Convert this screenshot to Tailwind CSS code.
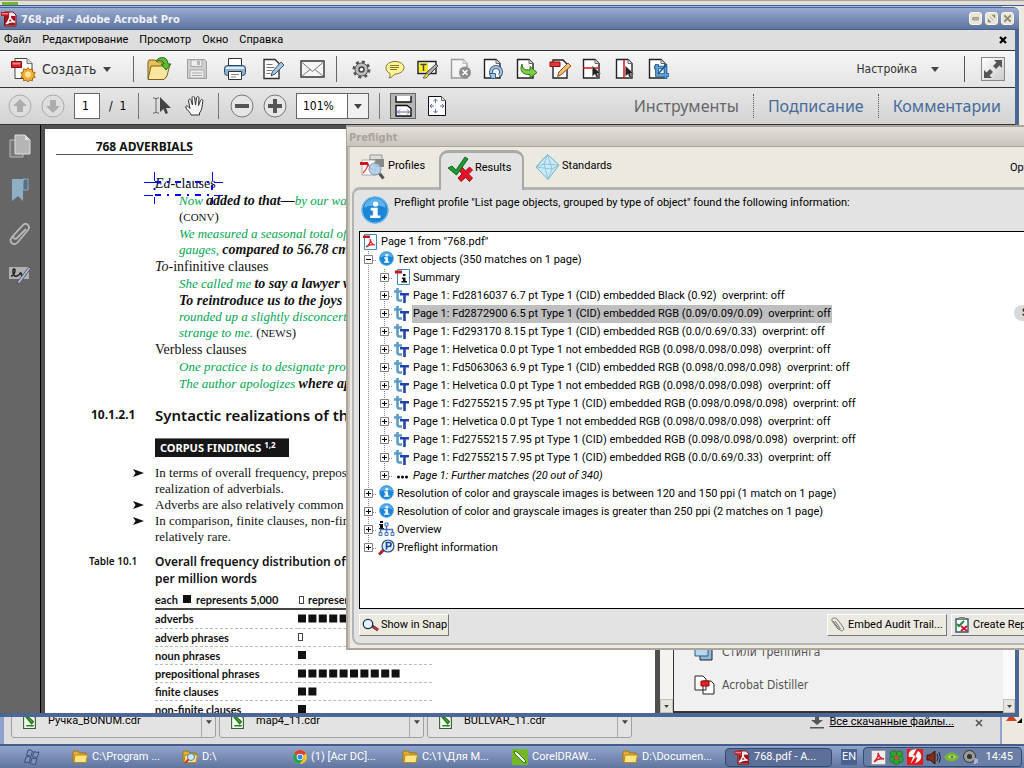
<!DOCTYPE html>
<html lang="ru">
<head>
<meta charset="utf-8">
<title>768.pdf - Adobe Acrobat Pro</title>
<script src="https://cdn.jsdelivr.net/npm/@tailwindcss/browser@4"></script>
</head>
<body class="h-screen overflow-hidden bg-[#ece9e1] font-['Roboto',sans-serif] text-[11px] text-black">

<!-- shared icons -->
<svg class="hidden" aria-hidden="true">
  <symbol id="pdf" viewBox="0 0 16 16"><path d="M3.500 1h8.500l3 3v11H3.500z" fill="#f4e9e9" stroke="#7a1414"/><path d="M0 1h8v4H0z" fill="#c3141d"/><path d="M4 5h10.500v9.500H4z" fill="#a3121a"/><path d="M5 13c2-2 4-5 4-9 0 4 2 6 5 7-4-1-6 0-9 2z" fill="none" stroke="#fff" stroke-width="1.500"/><path d="M1 2h6v1.500H1z" fill="#e98a8a"/></symbol>
  <symbol id="folder" viewBox="0 0 16 14"><path d="M1 12V2l1-1h4l1.500 2H14v9z" fill="#e5ae2f" stroke="#9c7413"/><path d="M2 12.500 3 5h12.500L14 12.500z" fill="#ffe482" stroke="#b78b1d"/></symbol>
  <symbol id="page" viewBox="0 0 22 22"><path d="M1.500 1.500h11.500l4 4v14.500H1.500z" fill="#fff" stroke="#222" stroke-width="1.400"/><path d="M13 1.500v4h4" fill="#ddd" stroke="#666"/></symbol>
  <symbol id="arrow" viewBox="0 0 10 14"><path d="M0 0v11l3-2.500L4.500 13l2-1L5 8h4z" fill="#222" stroke="#999" stroke-width=".6"/></symbol>
  <symbol id="info" viewBox="0 0 26 26"><circle cx="13" cy="13" r="12.500" fill="#1c86d6"/><circle cx="13" cy="13" r="12" fill="none" stroke="#7cc0ee"/><path d="M3 11a10 9 0 0 1 20 0c-6-3-14-3-20 0z" fill="#5db0ea"/><circle cx="13.500" cy="7.500" r="2.500" fill="#fff"/><path d="M9 11h6.500v7H18v2.500H8.500V18H11v-4.500H9z" fill="#fff"/></symbol>
  <symbol id="tt" viewBox="0 0 16 17"><path d="M3.500 1v10.500q0 2 2 2H8M0 4.500h8" fill="none" stroke="#5b9cc8" stroke-width="2.600"/><path d="M6 7.300h9M10.500 7v9" fill="none" stroke="#2443a8" stroke-width="2.600"/></symbol>
  <symbol id="plus" viewBox="0 0 16 18"><path d="M8.500 0v18M9 9.500h7" stroke="#888" stroke-dasharray="1 1"/><path d="M4.500 4.500h8v8h-8z" fill="#fff" stroke="#808080"/><path d="M6 8.500h5M8.500 6v5" stroke="#000"/></symbol>
  <symbol id="plusend" viewBox="0 0 16 18"><path d="M8.500 0v5M9 9.500h7" stroke="#888" stroke-dasharray="1 1"/><path d="M4.500 4.500h8v8h-8z" fill="#fff" stroke="#808080"/><path d="M6 8.500h5M8.500 6v5" stroke="#000"/></symbol>
  <symbol id="minus" viewBox="0 0 16 18"><path d="M8.500 0v18M9 9.500h7" stroke="#888" stroke-dasharray="1 1"/><path d="M4.500 4.500h8v8h-8z" fill="#fff" stroke="#808080"/><path d="M6 8.500h5" stroke="#000"/></symbol>
  <symbol id="vert" viewBox="0 0 16 18"><path d="M8.500 0v18" stroke="#888" stroke-dasharray="1 1"/></symbol>
  <symbol id="cdr" viewBox="0 0 12 14"><path d="M.5.5h8l3 3v10H.5z" fill="#f3fbe9" stroke="#2e5c3a"/><path d="M3 3l5 6 1.500-2L5 3zM3 11h7" fill="#6ab22e" stroke="#2d7a2d" stroke-width="1.500"/></symbol>
  <symbol id="bullet" viewBox="0 0 11 8"><path d="M0 0l11 4L0 8l2.500-4z" fill="#111"/></symbol>
  <symbol id="down" viewBox="0 0 8 5"><path d="M0 0h8L4 5z" fill="#444"/></symbol>
  <symbol id="pdfdoc" viewBox="0 0 14 16"><path d="M1.500.5h12v15h-12z" fill="#fff" stroke="#3d8ac8"/><path d="M0 1.500h7v2.500H0z" fill="#c8151b"/><path d="M3 13c3-2 5-5 4-8 1 4 2 6 5 6-4-1-6 0-9 2z" fill="none" stroke="#d3222a" stroke-width="1.200"/></symbol>
</svg>

<div class="flex h-full flex-col">
<main class="relative flex-1 overflow-hidden">

  <!-- browser window behind -->
  <section aria-label="Браузер" class="absolute inset-0 border-t border-[#a8a29a] bg-[#ece9e1]">
    <div class="flex h-[5px] items-end border-b border-[#3f5f90] bg-[#e3dfd8] pl-[2px]"><span class="h-[3px] w-[16px] bg-[#74b72c]"></span></div>
    <div class="mr-[22px] h-full border-x-4 border-t-2 border-[#8fa3cc] border-t-[#9bb6e4] bg-[#dedede]"></div>
  </section>
  <svg class="absolute right-0 bottom-[18px]" width="22" height="12" viewBox="0 0 22 12"><path d="M4 7 9 0l6 7z" fill="#d8401c"/><path d="M15 9h5V4z"/></svg>

  <section aria-label="Загрузки" class="absolute right-[24px] bottom-0 left-[6px] flex h-[45px] items-start gap-[3px] bg-[#dedede] pt-[6px] pl-[5px]">
    <div class="flex h-[33px] w-[205px] rounded-[3px] border border-[#a0a0a0] bg-[#e3e3e3]">
      <a href="#" class="flex flex-1 items-center gap-3 pl-[11px]"><svg width="13" height="15"><use href="#cdr"/></svg>Ручка_BONUM.cdr</a>
      <button aria-label="Меню" class="flex w-[14px] items-center justify-center border-l border-[#a8a8a8]"><svg width="6" height="4"><use href="#down"/></svg></button>
    </div>
    <div class="flex h-[33px] w-[205px] rounded-[3px] border border-[#a0a0a0] bg-[#e3e3e3]">
      <a href="#" class="flex flex-1 items-center gap-3 pl-[11px]"><svg width="13" height="15"><use href="#cdr"/></svg>map4_11.cdr</a>
      <button aria-label="Меню" class="flex w-[14px] items-center justify-center border-l border-[#a8a8a8]"><svg width="6" height="4"><use href="#down"/></svg></button>
    </div>
    <div class="flex h-[33px] w-[205px] rounded-[3px] border border-[#a0a0a0] bg-[#e3e3e3]">
      <a href="#" class="flex flex-1 items-center gap-3 pl-[11px]"><svg width="13" height="15"><use href="#cdr"/></svg>BULLVAR_11.cdr</a>
      <button aria-label="Меню" class="flex w-[14px] items-center justify-center border-l border-[#a8a8a8]"><svg width="6" height="4"><use href="#down"/></svg></button>
    </div>
    <div class="ml-auto flex h-[35px] items-center gap-[5px] pr-[17px]">
      <svg width="14" height="13" viewBox="0 0 14 13"><path d="M5 0h4v4h4L7 9 1 4h4zM0 11h14v1.500H0z" fill="#555"/></svg>
      <a href="#" class="underline">Все скачанные файлы...</a>
      <button aria-label="Закрыть" class="ml-[16px]"><svg width="8" height="8" viewBox="0 0 8 8"><path d="M1 1l6 6M7 1L1 7" stroke="#555" stroke-width="1.600"/></svg></button>
    </div>
  </section>

  <!-- Acrobat window -->
  <section aria-label="Adobe Acrobat Pro" class="absolute top-[7px] right-[5px] bottom-[27px] left-0 flex flex-col rounded-tr-[6px] border-t border-r-4 border-b-4 border-[#4d6795] bg-[#4f4f4f]">
    <header class="-mr-1 flex h-[22px] shrink-0 items-center gap-1 rounded-tr-[5px] border-b border-[#455f8f] bg-linear-to-b from-[#9aabcf] to-[#5e749f] pr-[5px] pl-px">
      <svg width="16" height="16"><use href="#pdf"/></svg>
      <h1 class="flex-1 pt-[3px] font-['DejaVu_Sans_Condensed',sans-serif] text-[11px] font-bold text-[#eef0f5]">768.pdf - Adobe Acrobat Pro</h1>
      <div class="flex gap-[3px]">
        <button aria-label="Свернуть" class="size-[13px] rounded-[3px] border border-[#f7f4ea] bg-[#e8e5da]"><svg viewBox="0 0 12 12"><path d="M3 5h6v2.500H3z" fill="#c8c2b0" stroke="#8d886f"/></svg></button>
        <button aria-label="Восстановить" class="size-[13px] rounded-[3px] border border-[#f7f4ea] bg-[#e8e5da]"><svg viewBox="0 0 12 12"><path d="M6 2h4v4zM2 6v4h4z" fill="#8d886f"/><path d="M4 4l4 4" stroke="#aaa58d"/></svg></button>
        <button aria-label="Закрыть" class="size-[13px] rounded-[3px] border border-[#f7f4ea] bg-[#e8e5da]"><svg viewBox="0 0 12 12"><path d="M2.500 2.500l7 7M9.500 2.500l-7 7" stroke="#8d886f" stroke-width="2"/></svg></button>
      </div>
    </header>

    <nav class="flex h-[21px] shrink-0 items-center gap-[11px] border-b border-[#333] bg-[#dedede] pr-2 pl-1">
      <a href="#">Файл</a><a href="#">Редактирование</a><a href="#">Просмотр</a><a href="#">Окно</a><a href="#">Справка</a>
      <button aria-label="Закрыть документ" class="ml-auto"><svg width="8" height="8" viewBox="0 0 8 8"><path d="M1 1l6 6M7 1L1 7" stroke="#000" stroke-width="2.200"/></svg></button>
    </nav>

    <div class="flex h-[37px] shrink-0 items-center border-b border-[#333] bg-linear-to-b from-[#f6f6f6] to-[#e4e4e4] text-[#333]">
      <button class="flex w-[133px] items-center pl-[11px] font-['DejaVu_Sans_Condensed',sans-serif] text-[14px]">
        <svg width="25" height="25" viewBox="0 0 25 25"><path d="M4 1.500h12l5 5v15H4z" fill="#fff" stroke="#444"/><path d="M16 1.500v5h5" fill="#ddd" stroke="#777"/><path d="M.5 4.500h10v6H.5z" fill="#cf1f2a" stroke="#900"/><path d="M1.500 5.500h8v2h-8z" fill="#f08080"/><path d="M17 10.500l1.700 2.200 2.700-.7.100 2.800 2.700.9-1.500 2.300 1.500 2.300-2.700.8-.1 2.800-2.700-.8-1.700 1.900-1.700-2-2.700.9-.1-2.800-2.600-.8 1.500-2.300-1.500-2.400 2.600-.8.100-2.800 2.700.7z" fill="#f2ae33" stroke="#a56b0a"/><circle cx="17" cy="17.500" r="3" fill="#ffe39a"/></svg>
        <span class="ml-[6px]">Создать</span><svg class="ml-[7px]" width="8" height="5"><use href="#down"/></svg>
      </button>
      <span class="mr-[6px] h-[26px] w-px bg-[#666]"></span>
      <button aria-label="Открыть" class="flex w-[38px] justify-center"><svg width="26" height="26" viewBox="0 0 26 26"><path d="M2 23V6l1-2h6l2 2h7v17z" fill="#e9c15b" stroke="#7d5f17"/><path d="M2 23.500 5 10h14l5-2-3 12-3 3.500z" fill="#fbe6a0" stroke="#7d5f17"/><path d="M10 5c3-5 12-5 12 3h3l-5 6-5-6h3c0-3-4-4-8-3z" fill="#5fbd33" stroke="#236b14"/></svg></button>
      <button aria-label="Сохранить" class="flex w-[38px] justify-center"><svg width="22" height="22" viewBox="0 0 22 22"><path d="M1.500 1.500h17l2 2v17h-19z" fill="#cfcfcf" stroke="#a0a0a0"/><path d="M5 2h11v6.500H5zM4 12h14v8H4z" fill="#eee" stroke="#a8a8a8"/><path d="M11 3h3v4h-3z" fill="#b5b5b5"/><path d="M6 15h10M6 17.500h10" stroke="#aaa"/></svg></button>
      <button aria-label="Печать" class="flex w-[38px] justify-center"><svg width="24" height="24" viewBox="0 0 24 24"><path d="M5.500 1.500h13v10h-13z" fill="#fff" stroke="#333"/><rect x="1.500" y="8.500" width="21" height="10" rx="3" fill="#8fb0d0" stroke="#2b4a68"/><path d="M3 11h18" stroke="#dcecf8" stroke-width="2"/><path d="M5.500 14.500h13v8h-13z" fill="#fff" stroke="#333"/><path d="M8 17.500h8M8 20h5" stroke="#888"/></svg></button>
      <button aria-label="Подписать" class="flex w-[39px] justify-center"><svg width="23" height="22" viewBox="0 0 23 22"><path d="M2 1.500h11l4 4v15H2z" fill="#fff" stroke="#333" stroke-width="1.400"/><path d="M4.500 6.500h6M4.500 9.500h8M4.500 12.500h6M4.500 15.500h4" stroke="#777"/><path d="M19 4l3 3-9 9-4 2 1.500-4.500z" fill="#aac7df" stroke="#33526c"/></svg></button>
      <button aria-label="Почта" class="flex w-[38px] justify-center"><svg width="25" height="18" viewBox="0 0 25 18"><path d="M1 1h23v16H1z" fill="#f4f4f4" stroke="#333" stroke-width="1.400"/><path d="M1 1.500l11.500 10L24 1.500M1.500 16.500l8.500-7M23.500 16.500l-8.500-7" fill="none" stroke="#777"/></svg></button>
      <span class="mr-[8px] ml-[5px] h-[26px] w-px bg-[#666]"></span>
      <button aria-label="Параметры" class="flex w-[33px] justify-center"><svg width="19" height="19" viewBox="0 0 19 19"><circle cx="9.500" cy="9.500" r="7.500" fill="none" stroke="#555" stroke-width="3" stroke-dasharray="3 2.900"/><circle cx="9.500" cy="9.500" r="6.500" fill="#bdbdbd" stroke="#555"/><circle cx="9.500" cy="9.500" r="2.500" fill="#eee" stroke="#444" stroke-width="1.400"/></svg></button>
      <button aria-label="Комментарий" class="flex w-[33px] justify-center"><svg width="20" height="19" viewBox="0 0 20 19"><path d="M10 1.500c5 0 9 2.600 9 6s-4 6.500-9 6.500c-1 0-3 4-6 4 1-1.500 1.500-3 1-4.500C2.500 12.500 1 10 1 7.500c0-3.400 4-6 9-6z" fill="#fdf59a" stroke="#8a7320"/><path d="M5 5.500h9M5 7.500h9M5 9.500h7" stroke="#8a7320"/></svg></button>
      <button aria-label="Выделение текста" class="flex w-[33px] justify-center"><svg width="21" height="19" viewBox="0 0 21 19"><path d="M1 1.500h18v12H1z" fill="#fff" stroke="#222" stroke-width="1.400"/><path d="M2 3h9v9H2z" fill="#ffec1f"/><path d="M3.500 4.500h6M6.500 4.500v6.500" stroke="#444" stroke-width="1.500"/><path d="M19 4l2 2-9 9-3-2z" fill="#aaa" stroke="#444"/><path d="M10 13l2 2-3 3H6z" fill="#ffd83c" stroke="#666655"/></svg></button>
      <button aria-label="Удалить страницу" class="flex w-[33px] justify-center"><svg width="22" height="22" viewBox="0 0 22 22"><g opacity=".4"><use href="#page"/></g><circle cx="15" cy="14.500" r="6" fill="#8e8e8e"/><path d="M12.500 12l5 5M17.500 12l-5 5" stroke="#fff" stroke-width="1.500"/></svg></button>
      <button aria-label="Повернуть страницу" class="flex w-[33px] justify-center"><svg width="22" height="22" viewBox="0 0 22 22"><use href="#page"/><path d="M9.500 17.500a5 5 0 1 1 7 0" fill="none" stroke="#37618a" stroke-width="4"/><path d="M9.500 17.500a5 5 0 1 1 7 0" fill="none" stroke="#a8c8e4" stroke-width="2"/><path d="M6.500 15.500h6v5h-4z" fill="#a8c8e4" stroke="#37618a"/></svg></button>
      <button aria-label="Извлечь страницу" class="flex w-[33px] justify-center"><svg width="22" height="22" viewBox="0 0 22 22"><use href="#page"/><path d="M6 6c0 5 3 6 8 6V8.500l7 6-7 5.500v-3.500C7 17 3 13 6 6z" fill="#7fce45" stroke="#2c6e17"/></svg></button>
      <button aria-label="Редактировать документ" class="flex w-[33px] justify-center"><svg width="22" height="22" viewBox="0 0 22 22"><path d="M4 2h10l4 4v14H4z" fill="#fff" stroke="#222" stroke-width="1.400"/><path d="M1 4h10v4.500H1z" fill="#dc3a3f" stroke="#a00"/><path d="M19 5l3 3-9.500 8.500-4 2L10 14z" fill="#f7c079" stroke="#8a4a15"/></svg></button>
      <button aria-label="Разделить по горизонтали" class="flex w-[33px] justify-center"><svg width="22" height="22" viewBox="0 0 22 22"><use href="#page"/><path d="M1 10h16" stroke="#e01010" stroke-width="1.500"/><use href="#arrow" x="10" y="8" width="10" height="13"/></svg></button>
      <button aria-label="Разделить по вертикали" class="flex w-[33px] justify-center"><svg width="22" height="22" viewBox="0 0 22 22"><use href="#page"/><path d="M9 2v18" stroke="#e01010" stroke-width="1.500"/><use href="#arrow" x="10" y="8" width="10" height="13"/></svg></button>
      <button aria-label="Обрезать" class="flex w-[33px] justify-center"><svg width="22" height="22" viewBox="0 0 22 22"><use href="#page"/><path d="M9 6v11h12M6 9.500h11.500V21" fill="none" stroke="#174f86" stroke-width="3.600"/><path d="M9 6.500v10.500h11.500M6.500 9.500h11V20.500" fill="none" stroke="#5ca2df" stroke-width="1.800"/><path d="M10 16l9-10" stroke="#174f86" stroke-width="1.200"/></svg></button>
      <button class="mr-[25px] ml-auto flex items-center gap-[14px] font-['DejaVu_Sans_Condensed',sans-serif] text-[12px]">Настройка<svg width="8" height="5"><use href="#down"/></svg></button>
      <span class="h-[26px] w-px bg-[#555]"></span>
      <button aria-label="Полноэкранный режим" class="mr-[10px] ml-[16px] size-[24px] border border-[#888] bg-linear-to-br from-white to-[#ccc]"><svg viewBox="0 0 22 22"><path d="M12 2h8v8l-2.500-2.500L14 11l-3-3 3.500-3.500zM2 20v-8l2.500 2.500L8 11l3 3-3.500 3.500L10 20z" fill="#555"/></svg></button>
    </div>

    <div class="flex h-[37px] shrink-0 items-center border-b border-[#333] bg-linear-to-b from-[#e6e6e6] to-[#d3d3d3]">
      <button aria-label="Предыдущая страница" class="ml-[8px]"><svg width="24" height="24" viewBox="0 0 24 24"><circle cx="12" cy="12" r="11" fill="#dedede" stroke="#ababab"/><path d="M12 5l7 7h-4v6H9v-6H5z" fill="#adadad"/></svg></button>
      <button aria-label="Следующая страница" class="ml-[9px]"><svg width="24" height="24" viewBox="0 0 24 24"><circle cx="12" cy="12" r="11" fill="#dedede" stroke="#ababab"/><path d="M12 19l7-7h-4V6H9v6H5z" fill="#adadad"/></svg></button>
      <input aria-label="Страница" value="1" class="ml-[9px] h-[26px] w-[26px] border border-[#666] bg-white pl-[7px] font-['DejaVu_Sans_Condensed',sans-serif] text-[12px]">
      <span class="ml-[9px] w-[29px] font-['DejaVu_Sans_Condensed',sans-serif] text-[12px] whitespace-pre">/  1</span>
      <span class="h-[26px] w-px bg-[#777]"></span>
      <button aria-label="Выделение" class="ml-[13px]"><svg width="20" height="20" viewBox="0 0 20 20"><path d="M1 2h2l1 1 1-1h2M4 3v13M1 17h2l1-1 1 1h2" fill="none" stroke="#666"/><path d="M8 1v15l3.500-3 2 5 2.500-1-2-5h5z" fill="#444"/></svg></button>
      <button aria-label="Рука" class="ml-[12px]"><svg width="22" height="22" viewBox="0 0 22 22"><path d="M7 20c0-2-3-4-5-7-1-2 1-3 2.500-1L6 13.500 4.500 6c-.3-2 2-2.500 2.500-.5L8.500 10 8 3c0-2 2.500-2 2.700 0L11.500 10l1-7c.3-2 2.600-1.600 2.500.2L14.500 10.500l2-5c.8-1.700 2.800-1 2.300.8C18 10 18.500 15 15.500 18v2z" fill="#f6f6f6" stroke="#333"/></svg></button>
      <span class="ml-[12px] h-[26px] w-px bg-[#777]"></span>
      <button aria-label="Уменьшить" class="ml-[11px]"><svg width="24" height="24" viewBox="0 0 24 24"><circle cx="12" cy="12" r="11" fill="#e6e6e6" stroke="#777"/><path d="M5 10h14v4H5z" fill="#555"/></svg></button>
      <button aria-label="Увеличить" class="ml-[9px]"><svg width="24" height="24" viewBox="0 0 24 24"><circle cx="12" cy="12" r="11" fill="#e6e6e6" stroke="#777"/><path d="M5 10h5V5h4v5h5v4h-5v5h-4v-5H5z" fill="#555"/></svg></button>
      <div class="ml-[9px] flex h-[26px] w-[73px] border border-[#666] bg-white">
        <input aria-label="Масштаб" value="101%" class="w-[51px] border-r border-[#666] pl-[6px] font-['DejaVu_Sans_Condensed',sans-serif] text-[12px]">
        <button aria-label="Выбрать масштаб" class="flex flex-1 items-center justify-center bg-[#f0f0f0]"><svg width="8" height="5"><use href="#down"/></svg></button>
      </div>
      <span class="ml-[10px] h-[26px] w-px bg-[#777]"></span>
      <button aria-label="По ширине" class="ml-[10px] flex size-[26px] items-center justify-center border border-[#666] bg-[#b5b5b5]"><svg width="17" height="21" viewBox="0 0 17 21"><path d="M1 0v6h15V0" fill="#fff" stroke="#111" stroke-width="1.400"/><path d="M1 20V9.500h11l4 3V20z" fill="#fff" stroke="#111" stroke-width="1.400"/><path d="M2.500 16h12M5 13.500 2.500 16 5 18.500M12 13.500l2.500 2.500-2.500 2.500" fill="none" stroke="#5570b8"/></svg></button>
      <button aria-label="Страница целиком" class="ml-[12px]"><svg width="18" height="20" viewBox="0 0 18 20"><path d="M.5.500h13l4 4v15H.5z" fill="#fff" stroke="#111"/><path d="M13.500.500v4h4" fill="#ddd" stroke="#666"/><path d="M7.500 3v4M7.500 13v4M2 10h4M12 10h4M5.500 5l2-2 2 2M5.500 15l2 2 2-2M4 8l-2 2 2 2M14 8l2 2-2 2" fill="none" stroke="#5570b8"/></svg></button>
      <nav class="ml-auto flex items-center font-['Noto_Sans',sans-serif] text-[16px] text-[#466c9a]">
        <a href="#" class="pr-[14px] text-[#666]">Инструменты</a>
        <a href="#" class="border-l border-dotted border-[#555] px-[14px]">Подписание</a>
        <a href="#" class="border-l border-dotted border-[#555] px-[14px]">Комментарии</a>
      </nav>
    </div>

    <div class="flex min-h-0 flex-1">
      <aside class="flex w-[41px] shrink-0 flex-col items-center gap-[20px] border-r border-black bg-[#666] pt-[9px]">
        <button aria-label="Миниатюры"><svg width="22" height="24" viewBox="0 0 22 24"><path d="M1 6h13v17H1z" fill="#777" stroke="#bbb"/><path d="M6 1h10l5 5v14H6z" fill="#b5b5b5" stroke="#ddd"/><path d="M16 1v5h5z" fill="#e0e0e0"/></svg></button>
        <button aria-label="Закладки"><svg width="18" height="24" viewBox="0 0 18 24"><path d="M12 1h5v11h-5z" fill="#557186" stroke="#88a8bf"/><path d="M1 1h13q-2 1-2 3v19l-5-5-6 5z" fill="#8fafc6"/></svg></button>
        <button aria-label="Вложения"><svg width="22" height="24" viewBox="0 0 22 24"><path d="M17 7 8 16c-2 2-5 0-3-3L14 3c3-3 8 1 5 5L9 20c-4 5-10 0-6-5l9-10" fill="none" stroke="#b8b8b8" stroke-width="1.800"/></svg></button>
        <button aria-label="Подписи"><svg width="24" height="18" viewBox="0 0 24 18"><path d="M1 1h20v12H1z" fill="#b0b0b0"/><path d="M3 10c4 0 5-8 3-7S5 12 9 10s3-4 4-3-1 4 3 2" fill="none" stroke="#222" stroke-width="1.500"/><path d="M23 2 12 17l-3 1 1-3L21 1z" fill="#a9c0d0" stroke="#555566"/></svg></button>
      </aside>

      <div class="min-w-0 flex-1 overflow-hidden bg-[#4f4f4f] pt-[4px] pr-[5px] pl-[4px]">
        <!-- document page -->
        <article lang="en" class="relative h-[1000px] bg-white whitespace-nowrap text-[#111]">
          <p class="ml-[11px] w-[137px] border-b border-[#555] pt-[10px] text-right font-['Noto_Sans',sans-serif] text-[12px] leading-[15px] font-bold">768 ADVERBIALS</p>
          <div class="ml-[110px] pt-[20px] font-['Liberation_Serif',serif] text-[14px] leading-[17px]">
            <p><i>Ed</i>-clauses</p>
            <p class="pl-[24px] text-[13px] text-[#00a651] italic">Now <b class="text-[14px] text-[#111]">added to that—</b>by our way of</p>
            <p class="pl-[24px] text-[13px] leading-[16px]">(<span class="text-[11px]">CONV</span>)</p>
            <p class="pl-[24px] text-[13px] text-[#00a651] italic">We measured a seasonal total of</p>
            <p class="pl-[24px] text-[13px] leading-[16px] text-[#00a651] italic">gauges, <b class="text-[14px] text-[#111]">compared to 56.78 cm</b></p>
            <p><i>To</i>-infinitive clauses</p>
            <p class="pl-[24px] text-[13px] text-[#00a651] italic">She called me <b class="text-[14px] text-[#111]">to say a lawyer w</b></p>
            <p class="pl-[24px] italic"><b>To reintroduce us to the joys</b></p>
            <p class="pl-[24px] text-[13px] leading-[16px] text-[#00a651] italic">rounded up a slightly disconcerting</p>
            <p class="pl-[24px] text-[13px] leading-[16px] text-[#00a651] italic">strange to me. <span class="text-[#111] not-italic">(<span class="text-[11px]">NEWS</span>)</span></p>
            <p>Verbless clauses</p>
            <p class="pl-[24px] text-[13px] text-[#00a651] italic">One practice is to designate provisions</p>
            <p class="pl-[24px] text-[13px] text-[#00a651] italic">The author apologizes <b class="text-[14px] text-[#111]">where appropriate</b></p>
          </div>
          <h2 class="flex items-center pt-[12px] pl-[46px] font-['Noto_Sans',sans-serif] text-[15px] leading-[22px] font-semibold"><span class="w-[64px] text-[12px] font-bold">10.1.2.1</span>Syntactic realizations of the</h2>
          <p class="mt-[12px] ml-[110px] w-[134px] border-t border-[#777] bg-[#161616] pl-[5px] font-['Noto_Sans',sans-serif] text-[11px] leading-[18px] font-bold text-white">CORPUS FINDINGS <sup class="text-[8px]">1,2</sup></p>
          <ul class="mt-[8px] ml-[88px] font-['Liberation_Serif',serif] text-[13px] leading-[16px]">
            <li class="flex gap-[11px]"><svg class="mt-[4px]" width="11" height="8"><use href="#bullet"/></svg><span>In terms of overall frequency, prepositional<br>realization of adverbials.</span></li>
            <li class="flex gap-[11px]"><svg class="mt-[4px]" width="11" height="8"><use href="#bullet"/></svg><span>Adverbs are also relatively common as</span></li>
            <li class="flex gap-[11px]"><svg class="mt-[4px]" width="11" height="8"><use href="#bullet"/></svg><span>In comparison, finite clauses, non-finite<br>relatively rare.</span></li>
          </ul>
          <div class="flex pt-[8px] pl-[44px] font-['Noto_Sans',sans-serif] leading-[17px] font-semibold"><span class="w-[66px] text-[10px]">Table 10.1</span><h3 class="text-[12px]">Overall frequency distribution of<br>per million words</h3></div>
          <table class="ml-[110px] w-[277px] border-collapse font-['Lato',sans-serif] text-[11px] leading-[17px] font-bold">
            <thead><tr class="border-b-2 border-[#444]"><th class="flex h-[21px] items-center gap-[5px] pt-[3px] font-bold">each <span class="size-[8px] bg-[#111]"></span> represents 5,000</th><th class="pt-[3px] pl-[1px] text-left font-bold"><span class="mr-[4px] inline-block h-[8px] w-[5px] border border-[#444]"></span>represents</th></tr></thead>
            <tbody>
              <tr class="h-[19px] border-b border-dashed border-[#bbb]"><td class="w-[143px]">adverbs</td><td><svg width="134" height="9"><path d="M0 4.500h113" stroke="#111" stroke-width="8" stroke-dasharray="8 2.400"/></svg></td></tr>
              <tr class="h-[18px] border-b border-dashed border-[#bbb]"><td>adverb phrases</td><td><span class="block h-[8px] w-[5px] border border-[#444]"></span></td></tr>
              <tr class="h-[18px] border-b border-dashed border-[#bbb]"><td>noun phrases</td><td><span class="block size-[8px] bg-[#111]"></span></td></tr>
              <tr class="h-[18px] border-b border-dashed border-[#bbb]"><td>prepositional phrases</td><td><svg width="134" height="9"><path d="M0 4.500h102" stroke="#111" stroke-width="8" stroke-dasharray="8 2.400"/></svg></td></tr>
              <tr class="h-[18px] border-b border-dashed border-[#bbb]"><td>finite clauses</td><td><svg width="134" height="9"><path d="M0 4.500h18.400" stroke="#111" stroke-width="8" stroke-dasharray="8 2.400"/></svg></td></tr>
              <tr class="h-[18px]"><td>non-finite clauses</td><td><span class="block size-[8px] bg-[#111]"></span></td></tr>
            </tbody>
          </table>
          <!-- selection marks round the found text -->
          <svg class="absolute top-[39px] left-[99px]" width="80" height="36" viewBox="0 0 80 36"><path d="M0 14.500h11M0 27.500h9M70 14.500h9M70 27.500h9M10.500 4v9M10.500 29v9M68.500 4v9M68.500 29v9" stroke="#00f"/><path d="M11 14h57M11 27h57" fill="none" stroke="#00f" stroke-width="2" stroke-dasharray="6 6 2 6"/><path d="M68 17v5M10.500 20v2" stroke="#00f" stroke-width="2"/></svg>
        </article>
      </div>

      <div class="flex w-[13px] shrink-0 flex-col justify-end bg-[#f5f3ef]"><button aria-label="Прокрутить вниз" class="flex h-[14px] items-center justify-center border border-[#c4c0b8] bg-[#e8e5de]"><svg width="5" height="3"><use href="#down"/></svg></button></div>
      <aside class="flex w-[330px] shrink-0 flex-col justify-end gap-[14px] border-b-2 border-l border-[#333] bg-[#f0f0f0] pb-[16px] pl-[20px] font-['DejaVu_Sans_Condensed',sans-serif] text-[12px] text-[#555]">
        <a href="#" class="flex items-center gap-[8px]"><svg width="20" height="19" viewBox="0 0 20 19"><path d="M6 4h12v14H6z" fill="#8fb8dc" stroke="#222"/><path d="M1 1h13v13H1z" fill="#b7d6ee" stroke="#36597a"/></svg>Стили треппинга</a>
        <a href="#" class="flex items-center gap-[7px]"><svg width="21" height="20" viewBox="0 0 21 20"><path d="M1 1h8l3 3v11H1zM9 6h8l3 3v10H9z" fill="#fff" stroke="#222"/><path d="M7 6h8v5H7z" fill="#d7262e" stroke="#a00"/></svg>Acrobat Distiller</a>
      </aside>
      <div class="flex w-[12px] shrink-0 flex-col justify-end bg-[#fafafa]"><button aria-label="Прокрутить панель вниз" class="flex h-[14px] items-center justify-center border border-[#c4c0b8] bg-[#e8e5de]"><svg width="5" height="3"><use href="#down"/></svg></button></div>
    </div>
  </section>

  <!-- Preflight window, running off the right edge -->
  <section lang="en" aria-label="Preflight" class="absolute top-[125px] -right-[104px] bottom-[94px] left-[346px] flex flex-col border-2 border-[#aaa69e] bg-[#ece9e1]">
    <header class="-ml-px flex h-[20px] shrink-0 items-center border-b border-[#a8a49c] bg-linear-to-b from-[#e2dfd9] to-[#c8c4bd] pt-[3px] pl-[2px] font-['DejaVu_Sans_Condensed',sans-serif] font-bold text-[#a9a49a]">Preflight</header>
    <div class="flex min-h-0 flex-1 flex-col border-l-2 border-[#c9c5bd] px-[2px] pb-[3px]">
      <div role="tablist" class="relative z-10 flex h-[40px] shrink-0 items-end">
        <button role="tab" class="flex h-[38px] w-[87px] items-center gap-[3px] pb-[3px] pl-[8px]"><svg width="25" height="26" viewBox="0 0 25 26"><path d="M10 1h12v5H10z" fill="#ddd" stroke="#999"/><path d="M9 5h15v8H9z" fill="#888"/><path d="M2 6h13v15H2z" fill="#fff" stroke="#aaa"/><path d="M3 19c3-3 5-7 5-10 1 5 4 7 7 7" fill="none" stroke="#d33" stroke-width="1.200"/><path d="M0 8h8v3H0z" fill="#d4141c"/><circle cx="15" cy="15" r="6" fill="#a9cdea" fill-opacity=".85" stroke="#7b94aa"/><path d="M19.500 19.500l4 5" stroke="#555" stroke-width="3"/></svg>Profiles</button>
        <button role="tab" aria-selected="true" class="-mb-[3px] flex h-[40px] w-[85px] items-center gap-[2px] rounded-t-[9px] border-x-2 border-t-3 border-[#a8a8a8] bg-[#e3e3e3] pb-[6px] pl-[7px]"><svg width="25" height="26" viewBox="0 0 25 26"><path d="M10 13l4-2 3.500 4 4-4 3 3-4 4 4 4-3 3.500-4-4-4.500 4-3-3.500 4-4z" fill="#e0152a" stroke="#a50d1d"/><path d="M0 12l4-2 4 4L17 1l3 2L8.500 19z" fill="#1f9a36" stroke="#0e6b20"/></svg>Results</button>
        <button role="tab" class="flex h-[38px] items-center gap-[2px] pb-[3px] pl-[11px]"><svg width="25" height="26" viewBox="0 0 25 26"><path d="M12.500.5 24 11 13 25.500 1 13z" fill="#c9e9f5" stroke="#6fb4cf"/><path d="M12.500.5 17 15l7-4M17 15 1 13l11.500-12.500M17 15l-4 10.500M1 13l8-3 15 1M9 10l3.500-9.500M9 10l4 15" fill="none" stroke="#7dbdd6" stroke-width=".8"/></svg>Standards</button>
        <button class="mr-[76px] mb-[11px] ml-auto">Options</button>
      </div>
      <div class="flex min-h-0 flex-1 flex-col rounded-[8px] border-2 border-t-3 border-[#b4b4b4] bg-[#e3e3e3] px-[5px]">
        <div class="flex h-[41px] shrink-0 gap-[5px] pt-[6px] pl-[2px]"><svg class="shrink-0" width="28" height="28"><use href="#info"/></svg><p class="leading-[14px]">Preflight profile "List page objects, grouped by type of object" found the following information:</p></div>
        <div role="tree" class="flex min-h-0 flex-1 flex-col border border-black bg-white pt-px leading-[18px] whitespace-pre">
          <div class="flex h-[18px] items-center gap-[4px] pl-[3px]"><svg width="14" height="16"><use href="#pdfdoc"/></svg>Page 1 from "768.pdf"</div>
          <div class="flex h-[18px]"><button aria-label="Свернуть"><svg width="16" height="18"><use href="#minus"/></svg></button><svg class="mx-[3px]" width="15" height="15"><use href="#info"/></svg>Text objects (350 matches on 1 page)</div>
          <div class="flex h-[18px]"><svg width="16" height="18"><use href="#vert"/></svg><button aria-label="Развернуть"><svg width="16" height="18"><use href="#plus"/></svg></button><svg class="mr-[2px] ml-[3px]" width="16" height="17" viewBox="0 0 16 17"><path d="M2.500.5h12v15h-12z" fill="#fff" stroke="#3d8ac8"/><path d="M0 1.500h7v3H0z" fill="#c8151b"/><path d="M8 5h2.500v2H8zM7 8.500h3.500V12H12v1.500H6.500V12H8v-2H7z" fill="#111"/></svg><span>Summary</span></div>
          <div class="flex h-[18px]"><svg width="16" height="18"><use href="#vert"/></svg><button aria-label="Развернуть"><svg width="16" height="18"><use href="#plus"/></svg></button><svg class="mx-[2px]" width="16" height="17"><use href="#tt"/></svg><span class="px-px">Page 1: Fd2816037 6.7 pt Type 1 (CID) embedded Black (0.92)  overprint: off</span></div>
          <div class="flex h-[18px]"><svg width="16" height="18"><use href="#vert"/></svg><button aria-label="Развернуть"><svg width="16" height="18"><use href="#plus"/></svg></button><svg class="mx-[2px]" width="16" height="17"><use href="#tt"/></svg><span class="bg-[#bfbfbf] px-px">Page 1: Fd2872900 6.5 pt Type 1 (CID) embedded RGB (0.09/0.09/0.09)  overprint: off</span><button class="mr-[20px] ml-auto h-[16px] rounded-full bg-[#d8d8d8] px-[8px] leading-[16px]">Show in Snap</button></div>
          <div class="flex h-[18px]"><svg width="16" height="18"><use href="#vert"/></svg><button aria-label="Развернуть"><svg width="16" height="18"><use href="#plus"/></svg></button><svg class="mx-[2px]" width="16" height="17"><use href="#tt"/></svg><span class="px-px">Page 1: Fd293170 8.15 pt Type 1 (CID) embedded RGB (0.0/0.69/0.33)  overprint: off</span></div>
          <div class="flex h-[18px]"><svg width="16" height="18"><use href="#vert"/></svg><button aria-label="Развернуть"><svg width="16" height="18"><use href="#plus"/></svg></button><svg class="mx-[2px]" width="16" height="17"><use href="#tt"/></svg><span class="px-px">Page 1: Helvetica 0.0 pt Type 1 not embedded RGB (0.098/0.098/0.098)  overprint: off</span></div>
          <div class="flex h-[18px]"><svg width="16" height="18"><use href="#vert"/></svg><button aria-label="Развернуть"><svg width="16" height="18"><use href="#plus"/></svg></button><svg class="mx-[2px]" width="16" height="17"><use href="#tt"/></svg><span class="px-px">Page 1: Fd5063063 6.9 pt Type 1 (CID) embedded RGB (0.098/0.098/0.098)  overprint: off</span></div>
          <div class="flex h-[18px]"><svg width="16" height="18"><use href="#vert"/></svg><button aria-label="Развернуть"><svg width="16" height="18"><use href="#plus"/></svg></button><svg class="mx-[2px]" width="16" height="17"><use href="#tt"/></svg><span class="px-px">Page 1: Helvetica 0.0 pt Type 1 not embedded RGB (0.098/0.098/0.098)  overprint: off</span></div>
          <div class="flex h-[18px]"><svg width="16" height="18"><use href="#vert"/></svg><button aria-label="Развернуть"><svg width="16" height="18"><use href="#plus"/></svg></button><svg class="mx-[2px]" width="16" height="17"><use href="#tt"/></svg><span class="px-px">Page 1: Fd2755215 7.95 pt Type 1 (CID) embedded RGB (0.098/0.098/0.098)  overprint: off</span></div>
          <div class="flex h-[18px]"><svg width="16" height="18"><use href="#vert"/></svg><button aria-label="Развернуть"><svg width="16" height="18"><use href="#plus"/></svg></button><svg class="mx-[2px]" width="16" height="17"><use href="#tt"/></svg><span class="px-px">Page 1: Helvetica 0.0 pt Type 1 not embedded RGB (0.098/0.098/0.098)  overprint: off</span></div>
          <div class="flex h-[18px]"><svg width="16" height="18"><use href="#vert"/></svg><button aria-label="Развернуть"><svg width="16" height="18"><use href="#plus"/></svg></button><svg class="mx-[2px]" width="16" height="17"><use href="#tt"/></svg><span class="px-px">Page 1: Fd2755215 7.95 pt Type 1 (CID) embedded RGB (0.098/0.098/0.098)  overprint: off</span></div>
          <div class="flex h-[18px]"><svg width="16" height="18"><use href="#vert"/></svg><button aria-label="Развернуть"><svg width="16" height="18"><use href="#plus"/></svg></button><svg class="mx-[2px]" width="16" height="17"><use href="#tt"/></svg><span class="px-px">Page 1: Fd2755215 7.95 pt Type 1 (CID) embedded RGB (0.0/0.69/0.33)  overprint: off</span></div>
          <div class="flex h-[18px]"><svg width="16" height="18"><use href="#vert"/></svg><button aria-label="Развернуть"><svg width="16" height="18"><use href="#plusend"/></svg></button><svg class="mx-[2px]" width="16" height="18" viewBox="0 0 16 18"><circle cx="4.500" cy="10" r="1.500"/><circle cx="8.500" cy="10" r="1.500"/><circle cx="12.500" cy="10" r="1.500"/></svg><span class="px-px italic">Page 1: Further matches (20 out of 340)</span></div>
          <div class="flex h-[18px]"><button aria-label="Развернуть"><svg width="16" height="18"><use href="#plus"/></svg></button><svg class="mx-[3px]" width="15" height="15"><use href="#info"/></svg>Resolution of color and grayscale images is between 120 and 150 ppi (1 match on 1 page)</div>
          <div class="flex h-[18px]"><button aria-label="Развернуть"><svg width="16" height="18"><use href="#plus"/></svg></button><svg class="mx-[3px]" width="15" height="15"><use href="#info"/></svg>Resolution of color and grayscale images is greater than 250 ppi (2 matches on 1 page)</div>
          <div class="flex h-[18px]"><button aria-label="Развернуть"><svg width="16" height="18"><use href="#plus"/></svg></button><svg class="mx-[2px]" width="17" height="16" viewBox="0 0 17 16"><path d="M2 0h3v2H2zM1 3h4v4h1v1H1V7h1V4H1z" fill="#111"/><path d="M8.500 5v6M2.500 11V8.500h12V11" fill="none" stroke="#4a74b8" stroke-width="1.400"/><path d="M7 2h3v3H7zM1 11.500h3v3H1zM7 11.500h3v3H7zM13 11.500h3v3h-3z" fill="#dce9fa" stroke="#4a74b8"/></svg>Overview</div>
          <div class="flex h-[18px]"><button aria-label="Развернуть"><svg width="16" height="18"><use href="#plusend"/></svg></button><svg class="mx-[2px]" width="17" height="17" viewBox="0 0 17 17"><path d="M1 15.500l5-5" stroke="#b2212a" stroke-width="3"/><circle cx="10" cy="7" r="6" fill="#e2f1fd" stroke="#244d77" stroke-width="1.200"/><path d="M8.500 10.500v-7H11q2 0 2 2t-2 2H8.500" fill="none" stroke="#1948a0" stroke-width="1.700"/></svg>Preflight information</div>
        </div>
        <div class="flex h-[34px] shrink-0 items-center pb-[2px]">
          <button class="flex h-[22px] items-center gap-[2px] border border-white border-r-[#777] border-b-[#777] bg-[#ece9e1] pr-px pl-[2px]"><svg width="17" height="14" viewBox="0 0 17 14"><path d="M10 8l6 4" stroke="#333" stroke-width="3"/><path d="M11 9l5 3" stroke="#d33" stroke-width="2"/><circle cx="6" cy="6" r="4.700" fill="#e2f4ff" stroke="#223344" stroke-width="1.300"/></svg>Show in Snap</button>
          <button class="ml-auto flex h-[22px] w-[120px] items-center gap-[3px] border border-white border-r-[#777] border-b-[#777] bg-[#ece9e1] pl-[2px]"><svg width="15" height="16" viewBox="0 0 15 16"><path d="M3 4l7 9c2 2 5 0 3-3L7 2C5 0 1 1 2 4l6 8c1 1 3 0 2-1L5 4" fill="none" stroke="#777"/></svg>Embed Audit Trail...</button>
          <button class="mr-[50px] ml-[4px] flex h-[22px] w-[116px] items-center gap-[4px] border border-white border-r-[#777] border-b-[#777] bg-[#ece9e1] pl-[3px]"><svg width="14" height="16" viewBox="0 0 14 16"><path d="M1 2h12v13H1z" fill="#fff" stroke="#2c5a66" stroke-width="1.400"/><path d="M4 0h6v3H4z" fill="#888"/><path d="M2 7l2 2 5-5" fill="none" stroke="#14903a" stroke-width="2"/><path d="M6 9l6 5M12 9l-6 5" stroke="#d2142a" stroke-width="2"/></svg>Create Report...</button>
        </div>
      </div>
    </div>
  </section>
</main>

<!-- taskbar -->
<footer class="flex h-[24px] shrink-0 items-center border-t-2 border-[#445d8c] bg-linear-to-b from-[#93a5cb] to-[#60759f] text-white">
  <button aria-label="Пуск" class="w-[62px] pl-[24px]"><svg width="18" height="16" viewBox="0 0 18 16"><path d="M4 1q2-1 4.500 1L7 7.500Q5 6 2.500 6.500zM10 2.500q2 1.500 5 .5l-1.500 5Q11 9 8.500 7.500zM2 8q2-1 4.500.5L5 14q-2-1.500-4.500-.5zM8 9q2 1.500 5 .5L11.500 15Q9 16 6.500 14.500z" fill="#8194b8" stroke="#39507c"/></svg></button>
  <button class="flex w-[110px] items-center gap-[4px] pl-[10px]"><svg width="16" height="14"><use href="#folder"/></svg>C:\Program ...</button>
  <button class="flex w-[110px] items-center gap-[4px] pl-[10px]"><svg width="16" height="14" viewBox="0 0 16 14"><use href="#folder"/><circle cx="9" cy="7" r="3.500" fill="#cdeafa" stroke="#4a86b4"/><path d="M6.500 9.500 3 13" stroke="#c33" stroke-width="2"/></svg>D:\</button>
  <button class="flex w-[110px] items-center gap-[4px] pl-[11px]"><svg width="14" height="14" viewBox="0 0 14 14"><circle cx="7" cy="7" r="7" fill="#f3c623"/><path d="M7 7 1 3.500a7 7 0 0 1 12 0z" fill="#dc3f31"/><path d="M7 7 1 3.500A7 7 0 0 0 6.500 14l4-5z" fill="#22a257"/><circle cx="7" cy="7" r="3.300" fill="#fff"/><circle cx="7" cy="7" r="2.500" fill="#4284e8"/></svg>(1) [Acr DC]...</button>
  <button class="flex w-[110px] items-center gap-[4px] pl-[10px]"><svg width="16" height="14"><use href="#folder"/></svg>C:\1\Для M...</button>
  <button class="flex w-[110px] items-center gap-[4px] pl-[10px]"><svg width="16" height="16" viewBox="0 0 16 16"><path d="M0 0h16v16H0z" fill="#72b828"/><path d="M2 2l3 1 8 8 1 3-3-1-8-8z" fill="#fff" stroke="#3d7a15"/></svg>CorelDRAW...</button>
  <button class="flex w-[110px] items-center gap-[4px] pl-[10px]"><svg width="16" height="14"><use href="#folder"/></svg>D:\Documen...</button>
  <button class="ml-[3px] flex h-[19px] w-[107px] items-center gap-[4px] rounded-[4px] border border-[#35486e] bg-[#5c6f97] pl-[8px]"><svg width="16" height="15"><use href="#pdf"/></svg>768.pdf - A...</button>
  <span class="ml-auto bg-[#4a6292] px-px">EN</span>
  <div class="mr-[2px] ml-[6px] flex h-[20px] w-[159px] items-center gap-[3px] rounded-[4px] border border-[#35486e] bg-[#6b7ea6] pl-[7px]">
    <svg width="15" height="15" viewBox="0 0 15 15"><path d="M.5.5h14v14H.5z" fill="#eee" stroke="#999"/><path d="M3 12c3-3 5-6 4-9 1 4 3 6 6 6-4-1-7 0-10 3z" fill="none" stroke="#d3222a" stroke-width="1.500"/></svg>
    <svg width="15" height="15" viewBox="0 0 15 15"><g fill="#2fa535" stroke="#0e6a1a" stroke-width=".6"><circle cx="4.500" cy="4" r="3.200"/><circle cx="10.500" cy="4" r="3.200"/><circle cx="3.800" cy="9.500" r="3.200"/><circle cx="11.200" cy="9.500" r="3.200"/><circle cx="7.500" cy="11.500" r="3.200"/></g><circle cx="7.500" cy="7.500" r="2.200" fill="#e0453c"/></svg>
    <svg width="16" height="16" viewBox="0 0 16 16"><path d="M0 0h16v16H0z" fill="#e51b1b"/><path d="M9.500 0 4.500 1A6 6 0 0 0 2 8h4L3.500 15l6-8.500H6zM11 2a6 6 0 0 1 1 10l-4 2.500 2.500-6H7.500z" fill="#fff"/></svg>
    <svg width="15" height="15" viewBox="0 0 15 15"><path d="M1 5h3l5-4v13L4 10H1z" fill="#8a2b18" stroke="#3b120a"/><path d="M11 4q2 3.500 0 7M13 2q3 5.500 0 11" fill="none" stroke="#222"/></svg>
    <svg width="16" height="12" viewBox="0 0 16 12"><path d="M0 6q8-9 15 0-8 9-15 0z" fill="#76b82a"/><path d="M4 6q4-4 8 0-4 4-8 0z" fill="#b6dc8a"/><circle cx="8" cy="6" r="1.500" fill="#4c8a14"/></svg>
    <svg width="15" height="15" viewBox="0 0 15 15"><circle cx="6.500" cy="6.500" r="6" fill="#9a9a9a" stroke="#333"/><circle cx="6.500" cy="6.500" r="2.500" fill="#333"/><path d="M12 8v6M14 9v4" stroke="#ddeeff"/></svg>
    <time class="mr-[8px] ml-auto">14:45</time>
  </div>
</footer>
</div>
</body>
</html>
